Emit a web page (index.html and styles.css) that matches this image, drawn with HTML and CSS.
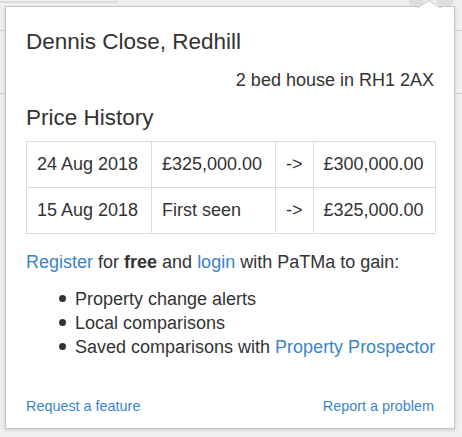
FILE: index.html
```html
<!DOCTYPE html>
<html>
<head>
<meta charset="utf-8">
<link rel="stylesheet" href="styles.css">
</head>
<body>
<div class="popup">
  <svg class="arrow" width="44" height="8" viewBox="0 0 44 8"><ellipse cx="7" cy="1" rx="8" ry="5" fill="#dedede"/><ellipse cx="36" cy="1" rx="9" ry="5" fill="#dedede"/><path d="M8 8 L20 0.5 L32 8" fill="#fff" stroke="#c4c4c4" stroke-width="1"/></svg>
  <h1 class="title">Dennis Close, Redhill</h1>
  <p class="subtitle">2 bed house in RH1 2AX</p>
  <h2 class="section">Price History</h2>
  <table class="history">
    <tr><td>24 Aug 2018</td><td>£325,000.00</td><td>-&gt;</td><td>£300,000.00</td></tr>
    <tr><td>15 Aug 2018</td><td>First seen</td><td>-&gt;</td><td>£325,000.00</td></tr>
  </table>
  <p class="register"><a href="#">Register</a> for <b>free</b> and <a href="#">login</a> with PaTMa to gain:</p>
  <ul class="benefits">
    <li>Property change alerts</li>
    <li>Local comparisons</li>
    <li>Saved comparisons with <a href="#">Property Prospector</a></li>
  </ul>
  <div class="footer">
    <a href="#">Request a feature</a>
    <a href="#">Report a problem</a>
  </div>
</div>
</body>
</html>
```
FILE: styles.css
```css
html, body {
  margin: 0;
  padding: 0;
}
body {
  width: 462px;
  height: 437px;
  background:
    linear-gradient(#d0d0d0, #d0d0d0) 0 30px / 100% 1px no-repeat,
    linear-gradient(#d0d0d0, #d0d0d0) 0 93px / 100% 1px no-repeat,
    linear-gradient(#dcdcdc, #dcdcdc) 0 1px / 118px 2px no-repeat,
    #efefef;
  font-family: "Liberation Sans", Arial, sans-serif;
  color: #333;
  overflow: hidden;
}
.popup {
  position: relative;
  margin: 6px 0 0 5px;
  width: 450px;
  height: 423px;
  box-sizing: border-box;
  background: #fff;
  border: 1px solid #c6c6c6;
  box-shadow: 0 1px 3px rgba(0,0,0,0.15);
  padding: 21px 20px 0 20px;
  display: flex;
  flex-direction: column;
}
.arrow {
  position: absolute;
  top: -7px;
  right: 1px;
}
a {
  color: #3a85c6;
  text-decoration: none;
}
.title {
  margin: 0;
  font-size: 22.5px;
  font-weight: normal;
  line-height: 28px;
}
.subtitle {
  margin: 12px 0 0;
  font-size: 18px;
  line-height: 24px;
  text-align: right;
}
.section {
  margin: 12px 0 0;
  font-size: 22.5px;
  font-weight: normal;
  line-height: 28px;
}
.history {
  margin-top: 9px;
  width: 410px;
  border-collapse: collapse;
  font-size: 18px;
}
.history td {
  border: 1px solid #dcdcdc;
  padding: 10px 10px;
  line-height: 25px;
  white-space: nowrap;
}
.history td:nth-child(1) { width: 104px; }
.history td:nth-child(2) { width: 103px; }
.history td:nth-child(3) { width: 16px; }
.register {
  margin: 16px 0 0;
  font-size: 18px;
  line-height: 24px;
}
.benefits {
  margin: 13px 0 0;
  padding-left: 49px;
  font-size: 18px;
  line-height: 24px;
  list-style: none;
}
.benefits li {
  white-space: nowrap;
}
.benefits li::before {
  content: "";
  display: inline-block;
  width: 7px;
  height: 7px;
  border-radius: 50%;
  background: #333;
  margin-left: -16px;
  margin-right: 9px;
  vertical-align: 3px;
}
.footer {
  margin-top: auto;
  margin-bottom: 12px;
  display: flex;
  justify-content: space-between;
  font-size: 14.4px;
  line-height: 20px;
}
```
